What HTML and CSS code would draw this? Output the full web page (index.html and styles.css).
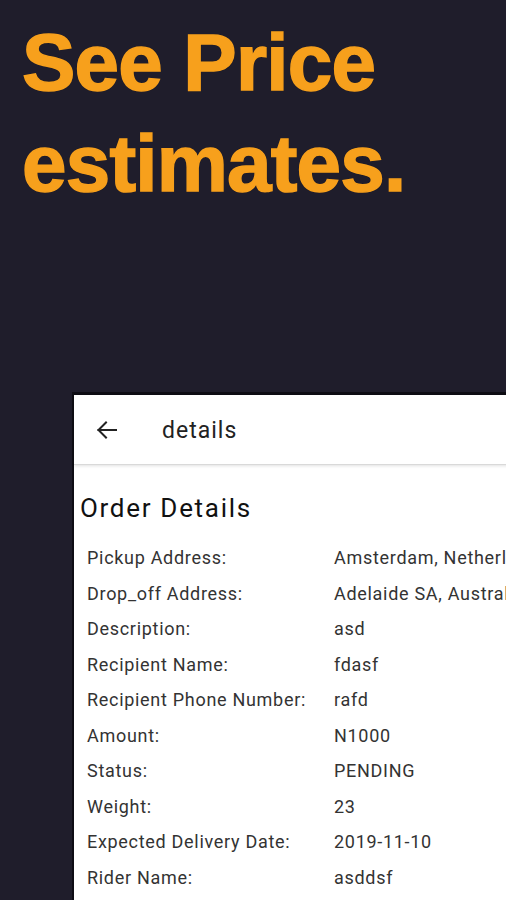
FILE: index.html
```html
<!DOCTYPE html>
<html lang="en">
<head>
  <meta charset="UTF-8">
  <meta name="viewport" content="width=device-width, initial-scale=1.0">
  <title>See Price estimates</title>
  <link rel="stylesheet" href="styles.css">
</head>
<body>
  <h1 class="headline">See Price<br>estimates.</h1>

  <div class="phone">
    <header class="app-bar">
      <button class="back" aria-label="Back">
        <svg width="22" height="20" viewBox="0 0 22 20" fill="none" stroke="#222" stroke-width="2" stroke-linecap="square">
          <path d="M2.5 10H20"/>
          <path d="M10 2.5L2.5 10L10 17.5"/>
        </svg>
      </button>
      <div class="app-title">details</div>
    </header>

    <main class="content">
      <h2>Order Details</h2>
      <div class="details">
        <div class="label">Pickup Address:</div><div class="value">Amsterdam, Netherlands</div>
        <div class="label">Drop_off Address:</div><div class="value">Adelaide SA, Australia</div>
        <div class="label">Description:</div><div class="value">asd</div>
        <div class="label">Recipient Name:</div><div class="value">fdasf</div>
        <div class="label">Recipient Phone Number:</div><div class="value">rafd</div>
        <div class="label">Amount:</div><div class="value">N1000</div>
        <div class="label">Status:</div><div class="value">PENDING</div>
        <div class="label">Weight:</div><div class="value">23</div>
        <div class="label">Expected Delivery Date:</div><div class="value">2019-11-10</div>
        <div class="label">Rider Name:</div><div class="value">asddsf</div>
      </div>
    </main>
  </div>
</body>
</html>
```

FILE: styles.css
```css
html, body {
  height: 100%;
}
body {
  margin: 0;
  background-color: #1f1d2b;
  font-family: Roboto, 'Noto Sans', sans-serif;
  overflow: hidden;
}
.headline {
  margin: 12px 0 0 22px;
  font-family: 'Liberation Sans', Arial, sans-serif;
  font-weight: 700;
  font-size: 80px;
  line-height: 101px;
  letter-spacing: -0.8px;
  color: #f7a01c;
  -webkit-text-stroke: 1.5px #f7a01c;
  text-shadow: 0 0 1px #0c0b12;
}
.phone {
  margin: 178px 0 0 72px;
  width: 460px;
  background-color: #fff;
  border-top: 3px solid #0e0d14;
  border-left: 2px solid #0e0d14;
  min-height: 600px;
}
.app-bar {
  display: flex;
  align-items: center;
  height: 69px;
  border-bottom: 1px solid #d9d9d9;
  box-shadow: 0 1px 3px rgba(0,0,0,0.12);
}
.back {
  display: flex;
  align-items: center;
  justify-content: center;
  margin-left: 22px;
  width: 22px;
  height: 24px;
  padding: 0;
  border: none;
  background: none;
}
.app-title {
  margin-left: 44px;
  font-size: 23px;
  letter-spacing: 1px;
  color: #222;
  padding-top: 1px;
}
.content {
  padding: 27px 0 0 6px;
}
h2 {
  margin: 0;
  font-weight: 400;
  font-size: 26px;
  line-height: 32px;
  letter-spacing: 1.7px;
  color: #111;
}
.details {
  display: grid;
  grid-template-columns: 247px 1fr;
  margin-top: 16px;
  padding-left: 7px;
  font-size: 18px;
  line-height: 35.5px;
  letter-spacing: 0.7px;
  color: #333;
  white-space: nowrap;
}
```
